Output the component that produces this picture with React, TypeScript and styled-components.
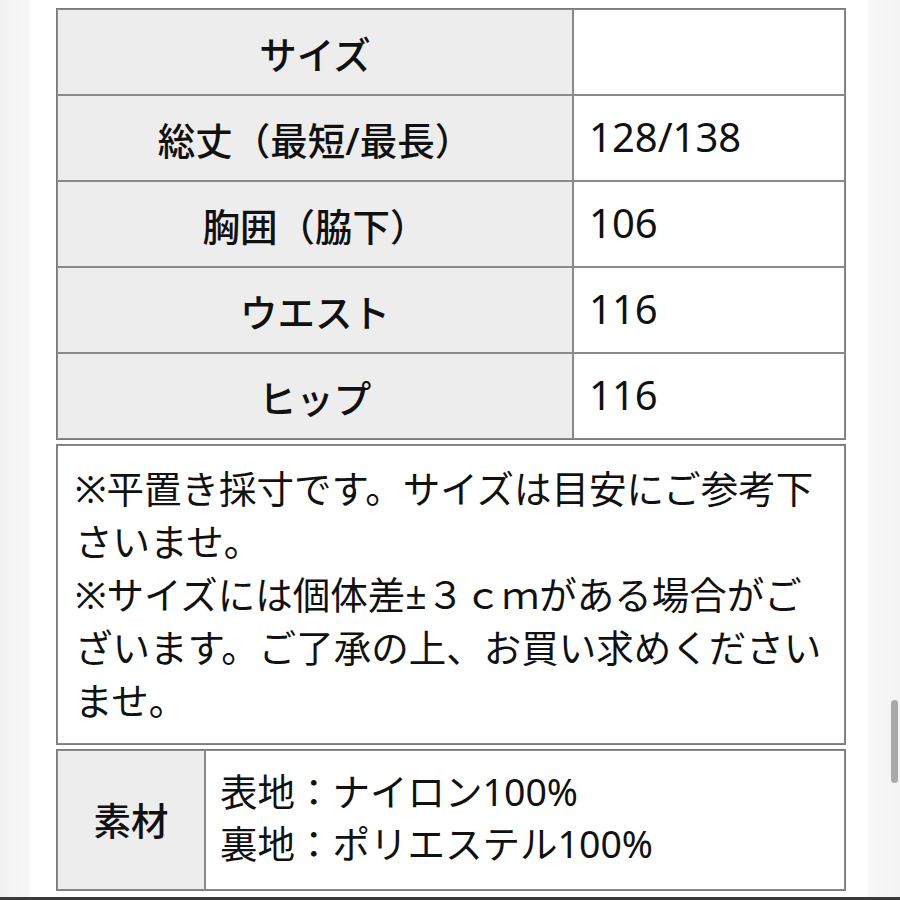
import React from "react"
import styled, { createGlobalStyle } from "styled-components"

const GlobalStyle = createGlobalStyle`
  html, body {
    margin: 0;
    padding: 0;
    background: #ffffff;
  }
  body {
    font-family: "Noto Sans", "Noto Sans CJK JP", sans-serif;
    color: #111111;
    text-spacing-trim: space-all;
  }
`

type SizeRow = { label: string; value: string }

const sizeRows: SizeRow[] = [
  { label: "サイズ", value: "" },
  { label: "総丈（最短/最長）", value: "128/138" },
  { label: "胸囲（脇下）", value: "106" },
  { label: "ウエスト", value: "116" },
  { label: "ヒップ", value: "116" },
]

const noteLines = [
  "※平置き採寸です。サイズは目安にご参考下",
  "さいませ。",
  "※サイズには個体差±３ｃｍがある場合がご",
  "ざいます。ご了承の上、お買い求めください",
  "ませ。",
]

const materialLines = ["表地：ナイロン100%", "裏地：ポリエステル100%"]

export default function App() {
  return (
    <>
      <GlobalStyle />
      <S.Page>
        <S.Main>
          <S.Gutter />
          <S.Content>
            <S.Table>
              <colgroup>
                <col style={{ width: 516 }} />
                <col />
              </colgroup>
              <tbody>
                {sizeRows.map((r) => (
                  <tr key={r.label}>
                    <S.HeadCell>{r.label}</S.HeadCell>
                    <S.ValueCell>{r.value}</S.ValueCell>
                  </tr>
                ))}
              </tbody>
            </S.Table>

            <S.Table>
              <tbody>
                <tr>
                  <S.NoteCell>
                    {noteLines.map((l, i) => (
                      <S.NoteLine key={i}>{l}</S.NoteLine>
                    ))}
                  </S.NoteCell>
                </tr>
              </tbody>
            </S.Table>

            <S.Table>
              <colgroup>
                <col style={{ width: 148 }} />
                <col />
              </colgroup>
              <tbody>
                <tr>
                  <S.MaterialHead>素材</S.MaterialHead>
                  <S.MaterialCell>
                    {materialLines.map((l) => (
                      <S.NoteLine key={l}>{l}</S.NoteLine>
                    ))}
                  </S.MaterialCell>
                </tr>
              </tbody>
            </S.Table>
          </S.Content>
          <S.Gutter $right>
            <S.Thumb />
          </S.Gutter>
        </S.Main>
        <S.BottomBar />
      </S.Page>
    </>
  )
}

const S = {
  Page: styled.div`
    display: flex;
    flex-direction: column;
    height: 900px;
    overflow: hidden;
  `,
  Main: styled.div`
    display: flex;
    flex: 1;
    min-height: 0;
  `,
  Gutter: styled.div<{ $right?: boolean }>`
    position: relative;
    width: ${({ $right }) => ($right ? "32px" : "30px")};
    flex-shrink: 0;
    background: ${({ $right }) =>
      $right ? "linear-gradient(90deg, #f8f8f8, #f3f3f3)" : "linear-gradient(90deg, #f2f2f2, #f7f7f7)"};
  `,
  Thumb: styled.div`
    position: absolute;
    left: 23px;
    top: 700px;
    width: 7px;
    height: 83px;
    border-radius: 4px;
    background: #a9a9a9;
  `,
  Content: styled.div`
    flex: 1;
    background: #ffffff;
    padding: 8px 22px 0 26px;
    display: flex;
    flex-direction: column;
    gap: 4px;
  `,
  Table: styled.table`
    width: 790px;
    table-layout: fixed;
    border-collapse: separate;
    border-spacing: 0;
    border: 1px solid #7c7c7c;
    font-size: 37.5px;
  `,
  HeadCell: styled.td`
    height: 86px;
    padding: 0 10px;
    box-sizing: border-box;
    border: 1px solid #8a8a8a;
    background: #ededed;
    text-align: center;
    vertical-align: middle;
    font-weight: 500;
    white-space: nowrap;
  `,
  ValueCell: styled.td`
    height: 86px;
    padding: 0 15px 3px;
    box-sizing: border-box;
    border: 1px solid #8a8a8a;
    background: #ffffff;
    vertical-align: middle;
    font-size: 40px;
    white-space: nowrap;
  `,
  NoteCell: styled.td`
    padding: 16px 17px 16px;
    border: 1px solid #8a8a8a;
    background: #ffffff;
    line-height: 53px;
  `,
  NoteLine: styled.div`
    white-space: nowrap;
  `,
  MaterialHead: styled.td`
    height: 140px;
    padding-bottom: 4px;
    box-sizing: border-box;
    border: 1px solid #8a8a8a;
    background: #ededed;
    text-align: center;
    vertical-align: middle;
    font-weight: 500;
  `,
  MaterialCell: styled.td`
    padding: 0 14px 4px;
    border: 1px solid #8a8a8a;
    background: #ffffff;
    vertical-align: middle;
    line-height: 52px;
  `,
  BottomBar: styled.div`
    height: 3px;
    flex-shrink: 0;
    background: #3a3a3a;
  `,
}
